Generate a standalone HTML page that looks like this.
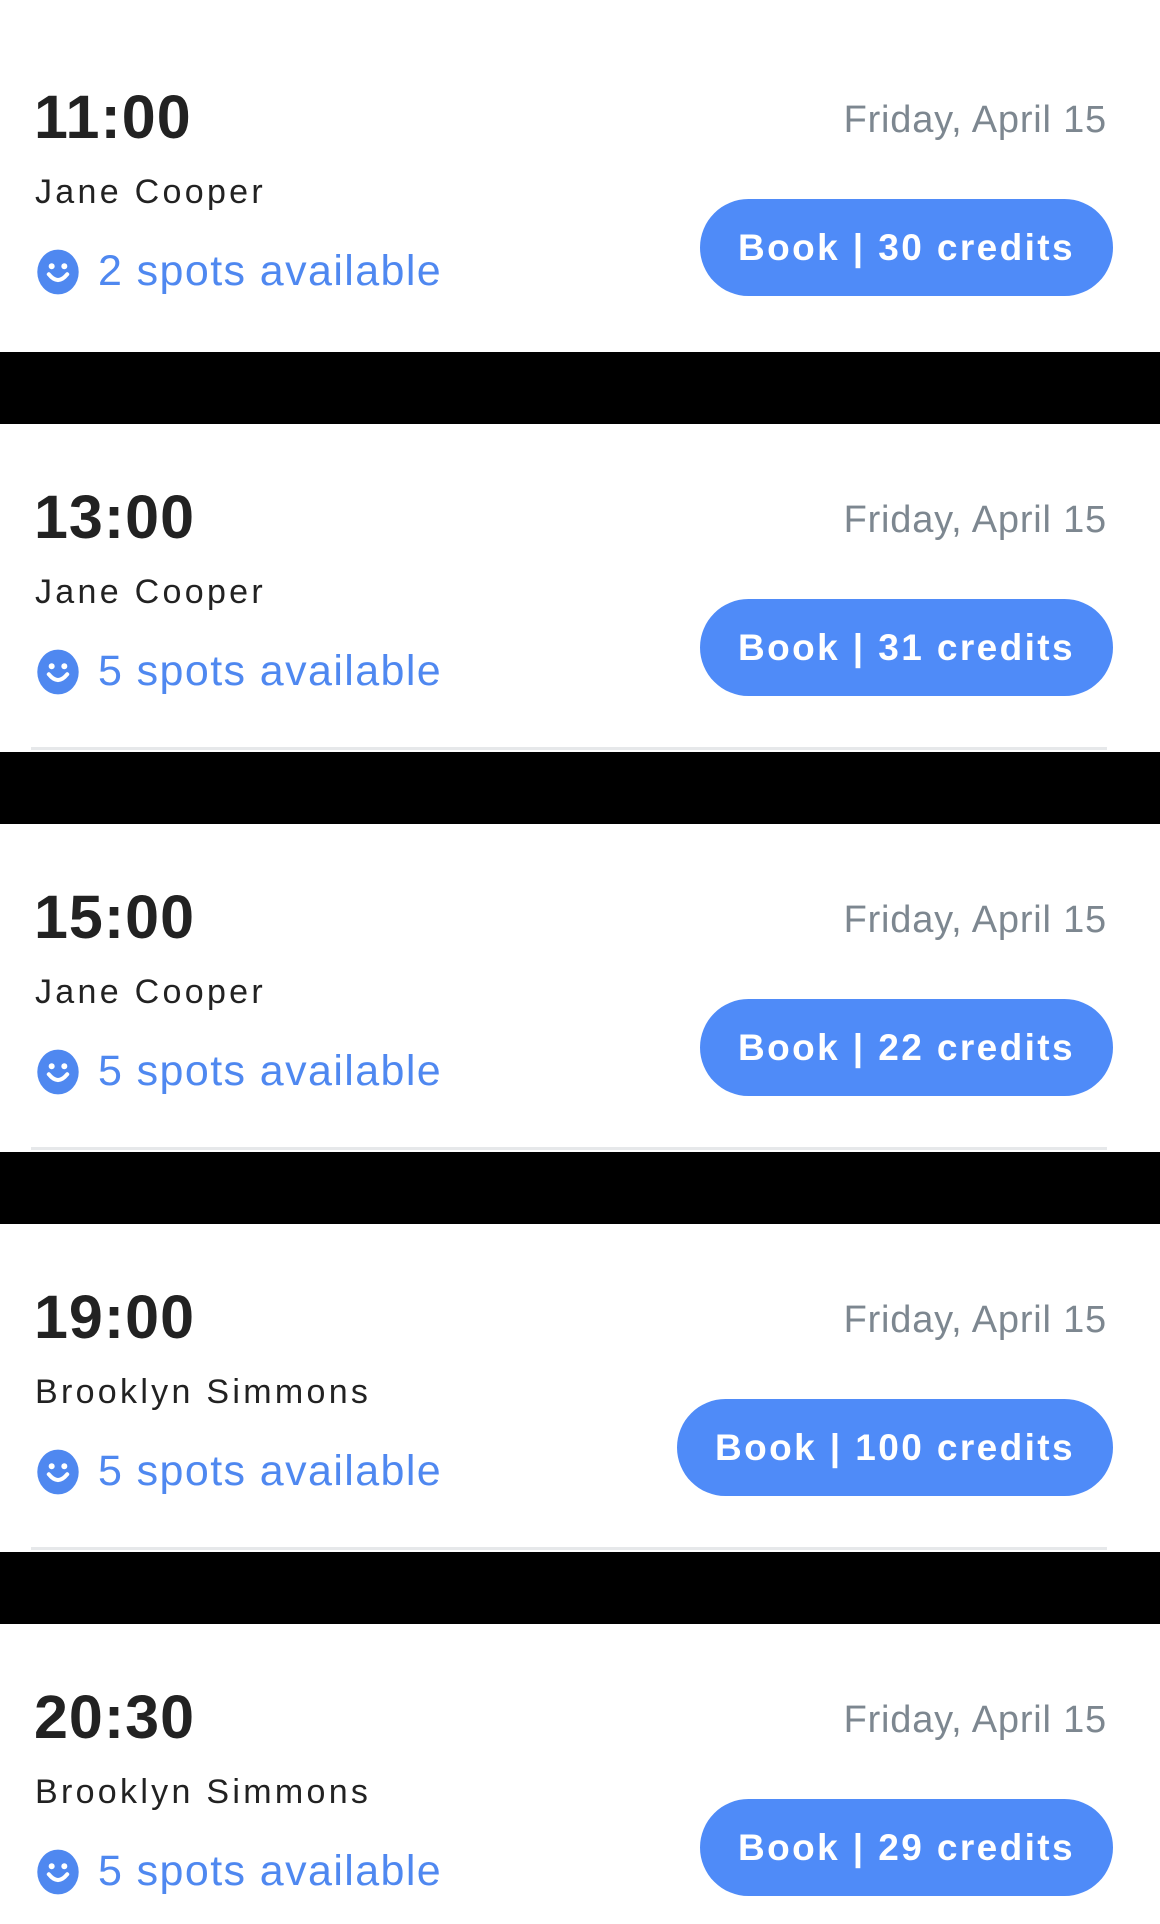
<!DOCTYPE html>
<html><head><meta charset="utf-8"><style>
*{margin:0;padding:0;box-sizing:border-box}
body{width:1160px;height:1924px;background:#000;font-family:"Liberation Sans",sans-serif;position:relative;overflow:hidden}
.card{position:absolute;left:0;width:1160px;height:328px;background:#fff}
.t{position:absolute;left:34px;top:63px;font-size:61px;line-height:61px;font-weight:bold;color:#222;letter-spacing:1px}
.n{position:absolute;left:35px;top:151px;font-size:34px;line-height:34px;color:#222;letter-spacing:3.3px}
.s{position:absolute;left:98px;top:226px;font-size:43px;line-height:43px;color:#4f88f0;letter-spacing:1.4px}
.ic{position:absolute;left:36px;top:225px;width:44px;height:46px}
.d{position:absolute;right:53px;top:77px;font-size:38px;line-height:38px;color:#7d8790;letter-spacing:.8px}
.b{position:absolute;right:47px;top:175px;height:97px;border-radius:49px;background:#4f8bf8;color:#fff;font-weight:bold;font-size:37px;line-height:97px;padding:0 38px;letter-spacing:2.4px}
.l{position:absolute;left:31px;width:1076px;top:323px;height:3px;background:#e6e8ea}
</style></head><body>

<div class="card" style="top:0;height:352px"><div style="position:absolute;top:24px;left:0;width:1160px;height:328px">
<div class="t">11:00</div><div class="n">Jane Cooper</div>
<svg class="ic" viewBox="0 0 38 40"><ellipse cx="19" cy="20" rx="18" ry="19.5" fill="#4f88f0"/><circle cx="13.5" cy="15" r="2.6" fill="#fff"/><circle cx="24.5" cy="15" r="2.6" fill="#fff"/><path d="M11 22 Q19 32 27 22" stroke="#fff" stroke-width="3.5" fill="none" stroke-linecap="round"/></svg>
<div class="s">2 spots available</div>
<div class="d">Friday, April 15</div><div class="b">Book | 30 credits</div>
</div></div>

<div class="card" style="top:424px">
<div class="t">13:00</div><div class="n">Jane Cooper</div>
<svg class="ic" viewBox="0 0 38 40"><ellipse cx="19" cy="20" rx="18" ry="19.5" fill="#4f88f0"/><circle cx="13.5" cy="15" r="2.6" fill="#fff"/><circle cx="24.5" cy="15" r="2.6" fill="#fff"/><path d="M11 22 Q19 32 27 22" stroke="#fff" stroke-width="3.5" fill="none" stroke-linecap="round"/></svg>
<div class="s">5 spots available</div>
<div class="d">Friday, April 15</div><div class="b">Book | 31 credits</div><div class="l"></div>
</div>

<div class="card" style="top:824px">
<div class="t">15:00</div><div class="n">Jane Cooper</div>
<svg class="ic" viewBox="0 0 38 40"><ellipse cx="19" cy="20" rx="18" ry="19.5" fill="#4f88f0"/><circle cx="13.5" cy="15" r="2.6" fill="#fff"/><circle cx="24.5" cy="15" r="2.6" fill="#fff"/><path d="M11 22 Q19 32 27 22" stroke="#fff" stroke-width="3.5" fill="none" stroke-linecap="round"/></svg>
<div class="s">5 spots available</div>
<div class="d">Friday, April 15</div><div class="b">Book | 22 credits</div><div class="l"></div>
</div>

<div class="card" style="top:1224px">
<div class="t">19:00</div><div class="n">Brooklyn Simmons</div>
<svg class="ic" viewBox="0 0 38 40"><ellipse cx="19" cy="20" rx="18" ry="19.5" fill="#4f88f0"/><circle cx="13.5" cy="15" r="2.6" fill="#fff"/><circle cx="24.5" cy="15" r="2.6" fill="#fff"/><path d="M11 22 Q19 32 27 22" stroke="#fff" stroke-width="3.5" fill="none" stroke-linecap="round"/></svg>
<div class="s">5 spots available</div>
<div class="d">Friday, April 15</div><div class="b">Book | 100 credits</div><div class="l"></div>
</div>

<div class="card" style="top:1624px;height:300px">
<div class="t">20:30</div><div class="n">Brooklyn Simmons</div>
<svg class="ic" viewBox="0 0 38 40"><ellipse cx="19" cy="20" rx="18" ry="19.5" fill="#4f88f0"/><circle cx="13.5" cy="15" r="2.6" fill="#fff"/><circle cx="24.5" cy="15" r="2.6" fill="#fff"/><path d="M11 22 Q19 32 27 22" stroke="#fff" stroke-width="3.5" fill="none" stroke-linecap="round"/></svg>
<div class="s">5 spots available</div>
<div class="d">Friday, April 15</div><div class="b">Book | 29 credits</div>
</div>

</body></html>
